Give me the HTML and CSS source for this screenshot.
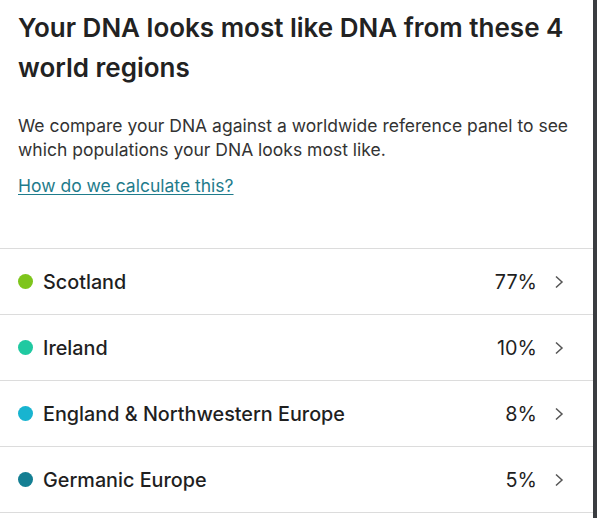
FILE: index.html
```html
<!DOCTYPE html>
<html lang="en">
<head>
<meta charset="utf-8">
<title>Ancestry regions</title>
<link rel="stylesheet" href="styles.css">
</head>
<body>
<div class="page">
  <main class="panel">
    <section class="intro">
      <h1 class="title">Your DNA looks most like DNA from these 4 world regions</h1>
      <p class="desc">We compare your DNA against a worldwide reference panel to see which populations your DNA looks most like.</p>
      <a class="link" href="#">How do we calculate this?</a>
    </section>
    <ul class="regions">
      <li class="region"><span class="dot dot-scotland"></span><span class="name">Scotland</span><span class="pct">77%</span><svg class="chev" viewBox="0 0 16 16"><path d="M5 2.5 L11 8 L5 13.5"/></svg></li>
      <li class="region"><span class="dot dot-ireland"></span><span class="name">Ireland</span><span class="pct">10%</span><svg class="chev" viewBox="0 0 16 16"><path d="M5 2.5 L11 8 L5 13.5"/></svg></li>
      <li class="region"><span class="dot dot-england"></span><span class="name">England &amp; Northwestern Europe</span><span class="pct">8%</span><svg class="chev" viewBox="0 0 16 16"><path d="M5 2.5 L11 8 L5 13.5"/></svg></li>
      <li class="region"><span class="dot dot-germanic"></span><span class="name">Germanic Europe</span><span class="pct">5%</span><svg class="chev" viewBox="0 0 16 16"><path d="M5 2.5 L11 8 L5 13.5"/></svg></li>
    </ul>
  </main>
  <div class="edge"></div>
</div>
</body>
</html>
```

FILE: styles.css
```css
html, body {
  margin: 0;
  padding: 0;
  background: #ffffff;
}
body {
  font-family: Inter, "Noto Sans", "Liberation Sans", sans-serif;
  color: #1f1f1f;
}
.page {
  display: flex;
  width: 597px;
  height: 518px;
  overflow: hidden;
}
.panel {
  flex: 1;
  min-width: 0;
}
.edge {
  width: 4px;
  background: #3a3d41;
}
.intro {
  padding: 8px 18px 0 18px;
  height: 240px;
}
.title {
  margin: 0;
  font-size: 26px;
  line-height: 40px;
  font-weight: 600;
  letter-spacing: 0;
  color: #222;
}
.desc {
  margin: 26px 0 0 0;
  font-size: 17.5px;
  line-height: 24px;
  font-weight: 400;
  color: #333;
}
.link {
  display: inline-block;
  margin-top: 12px;
  font-size: 17.5px;
  line-height: 24px;
  color: #1f7c8c;
  text-decoration: underline;
  text-underline-offset: 2px;
}
.regions {
  list-style: none;
  margin: 0;
  padding: 0;
  border-top: 1px solid #dcdcdc;
}
.region {
  display: flex;
  align-items: center;
  height: 65px;
  padding: 0 26px 0 18px;
  border-bottom: 1px solid #dcdcdc;
  font-size: 19.8px;
  font-weight: 500;
  color: #1f1f1f;
}
.dot {
  width: 15px;
  height: 15px;
  border-radius: 50%;
  margin-right: 10px;
  flex: none;
}
.dot-scotland { background: #7ec51c; }
.dot-ireland { background: #20c9a1; }
.dot-england { background: #18b4d0; }
.dot-germanic { background: #147f93; }
.name {
  flex: 1;
}
.pct {
  font-weight: 400;
}
.chev {
  width: 16px;
  height: 16px;
  margin-left: 14px;
  fill: none;
  stroke: #555;
  stroke-width: 1.5;
}
```
